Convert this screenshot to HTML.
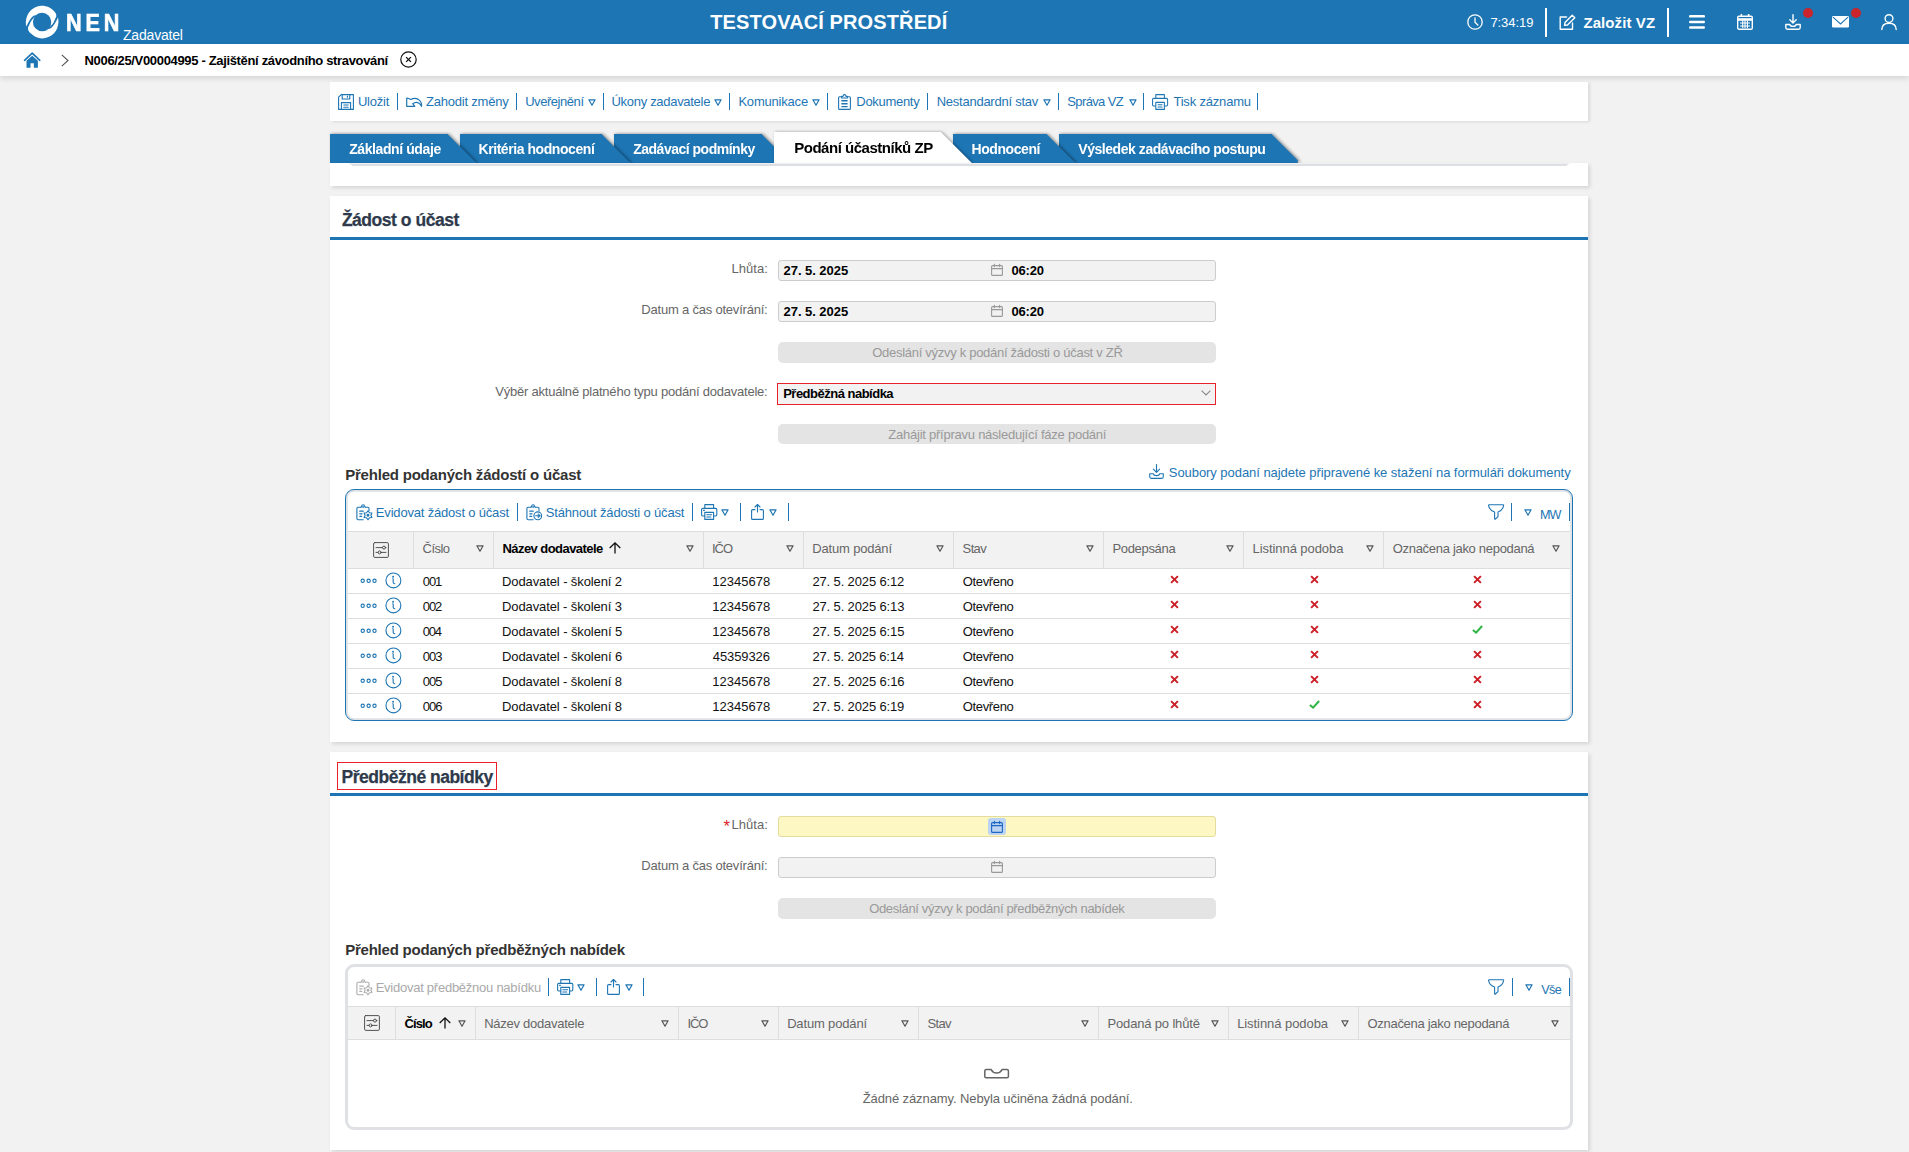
<!DOCTYPE html>
<html lang="cs">
<head>
<meta charset="utf-8">
<title>NEN - Zadavatel</title>
<style>
*{box-sizing:border-box;margin:0;padding:0}
html,body{width:1909px;height:1152px;overflow:hidden}
body{background:#f2f2f2;font-family:"Liberation Sans",sans-serif;font-size:13px;color:#000;position:relative}
.abs{position:absolute}
span.f{display:inline-block;white-space:nowrap}
svg{display:block;overflow:visible}
/* header */
#hdr{position:absolute;left:0;top:0;width:1909px;height:44px;background:#1d75b4;color:#fff}
#hdr .nen{position:absolute;left:66px;top:8.8px;font-weight:bold;font-size:24px;line-height:28px;transform:scaleX(.9);transform-origin:0 0;-webkit-text-stroke:0.7px #fff}
#hdr .zad{position:absolute;left:123px;top:27px;font-size:14px;line-height:16px}
#hdr .env{position:absolute;left:710px;top:10px;font-weight:bold;font-size:20px;line-height:24px}
#hdr .time{position:absolute;left:1491px;top:14.8px;font-size:13px;line-height:16px}
#hdr .newvz{position:absolute;left:1583.5px;top:13.8px;font-size:15px;font-weight:bold;line-height:18px}
#hdr .vsep{position:absolute;top:8px;width:2px;height:29px;background:#fff}
.dot{position:absolute;width:10px;height:10px;border-radius:50%;background:#c9252b}
/* breadcrumb */
#bc{position:absolute;left:0;top:44px;width:1909px;height:32px;background:#fff;box-shadow:0 2px 6px rgba(0,0,0,.14)}
#bc .t{position:absolute;left:85px;top:8.9px;font-weight:bold;font-size:13px;line-height:16px;color:#000}
/* panels */
.panel{position:absolute;left:330px;width:1258px;background:#fff;box-shadow:2px 2px 4px rgba(0,0,0,.12)}
.blue{color:#1d75b4}
/* toolbar */
#tb{top:82px;height:39px;box-shadow:2px 1px 3px rgba(0,0,0,.1)}
#tb .it{position:absolute;top:11px;height:17px;line-height:17px;color:#1d75b4;font-size:13px;white-space:nowrap}
#tb .sp{position:absolute;top:11px;width:1.3px;height:17px;background:#1d75b4}
.tri{position:absolute}
/* tabs */
.tab{position:absolute;top:134px;height:29px;background:#1d75b4;color:#fff;font-weight:bold;font-size:14px;line-height:31px;padding-left:19px;filter:drop-shadow(2px 0 1.5px rgba(0,0,0,.3)) drop-shadow(0 -1px 1px rgba(0,0,0,.12))}
.tab:after{content:"";position:absolute;right:-28.5px;top:0;width:29px;height:29px;background:inherit;clip-path:polygon(0 0,0 100%,100% 100%)}
.tab.act{top:132px;height:31px;background:#fff;color:#000;font-size:15px;line-height:31px;padding-left:20px;filter:drop-shadow(2px 0 1.5px rgba(0,0,0,.2)) drop-shadow(0 -1px 1px rgba(0,0,0,.1))}
.tab.act:after{width:31px;height:31px;right:-30.5px}
.tab.last:after{clip-path:polygon(0 0,0 100%,26.3px 100%,26.3px 26.3px)}

/* content */
.t{white-space:nowrap}
.title{font-weight:bold;color:#2e3a4b;-webkit-text-stroke:0.25px #2e3a4b}
.bline{background:#1d75b4}
.lbl{color:#666}
.val{font-weight:bold;color:#000}
.inp{background:#f2f2f2;border:1px solid #ccc;border-radius:3px}
.inp.sel{border-color:#e8212b;border-radius:0}
.inp.yel{background:#fdf7c3;border-color:#e3dc9c}
.hl{background:#bcd3f2;border-radius:3px}
.btn{background:#e4e4e4;border-radius:5px}
.btnt{color:#999}
.h2{font-weight:bold;color:#333}
.lnk{color:#1d75b4}
.lnk.dis{color:#a9a9a9}
.tbox{border:3px solid #dfe1e5;border-radius:9px}
.tbox.act{border:1.2px solid #1d75b4;box-shadow:inset 0 0 0 1.8px #dfe1e5}
.thead{background:#f2f2f2;border-top:1px solid #ddd;border-bottom:1px solid #ddd}
.vline{background:#ddd}
.hline{background:#ddd}
.th{color:#666}
.th.b{color:#000;font-weight:bold}
.td{color:#111}
.redbox{border:1px solid #e8212b}
.req{color:#dc2026}
.empty{color:#666}
</style>
</head>
<body>
<div id="hdr">
  <svg class="abs" style="left:26px;top:6px" width="32" height="32" viewBox="0 0 32 32" fill="#fff"><path d="M0.19 20.50C0.14 19.67 -0.28 17.27 -0.13 15.50C0.02 13.73 0.37 11.67 1.10 9.90C1.83 8.13 2.78 6.37 4.25 4.90C5.72 3.43 7.92 1.96 9.90 1.10C11.88 0.24 14.02 -0.28 16.10 -0.28C18.18 -0.28 20.57 0.35 22.40 1.10C24.23 1.85 25.85 3.15 27.10 4.25C28.35 5.35 29.37 6.66 29.90 7.70C30.43 8.74 30.23 10.03 30.30 10.50C30.12 10.88 29.70 11.76 29.25 12.75C28.80 13.74 28.29 15.31 27.60 16.45C26.91 17.59 25.87 18.71 25.10 19.60C24.33 20.49 23.35 21.43 23.00 21.80A9.14 9.14 0 0 0 9.7 9.45C9.40 9.47 8.62 9.21 7.90 9.60C7.18 9.99 6.23 10.82 5.40 11.80C4.57 12.78 3.62 14.32 2.90 15.50C2.18 16.68 1.55 18.07 1.10 18.90C0.65 19.73 0.34 20.23 0.19 20.50Z"/><path d="M0.19 20.50C0.14 19.67 -0.28 17.27 -0.13 15.50C0.02 13.73 0.37 11.67 1.10 9.90C1.83 8.13 2.78 6.37 4.25 4.90C5.72 3.43 7.92 1.96 9.90 1.10C11.88 0.24 14.02 -0.28 16.10 -0.28C18.18 -0.28 20.57 0.35 22.40 1.10C24.23 1.85 25.85 3.15 27.10 4.25C28.35 5.35 29.37 6.66 29.90 7.70C30.43 8.74 30.23 10.03 30.30 10.50C30.12 10.88 29.70 11.76 29.25 12.75C28.80 13.74 28.29 15.31 27.60 16.45C26.91 17.59 25.87 18.71 25.10 19.60C24.33 20.49 23.35 21.43 23.00 21.80A9.14 9.14 0 0 0 9.7 9.45C9.40 9.47 8.62 9.21 7.90 9.60C7.18 9.99 6.23 10.82 5.40 11.80C4.57 12.78 3.62 14.32 2.90 15.50C2.18 16.68 1.55 18.07 1.10 18.90C0.65 19.73 0.34 20.23 0.19 20.50Z" transform="rotate(180 16.15 16.05)"/><circle cx="16.1" cy="16" r="9.14" fill="#1d75b4"/></svg>
  <div class="nen"><span class="f" style="letter-spacing:4.308px;position:relative;left:0.12px">NEN</span></div>
  <div class="zad"><span class="f" style="letter-spacing:-0.184px;position:relative;left:-0.04px">Zadavatel</span></div>
  <div class="env"><span class="f" style="letter-spacing:0.115px;position:relative;left:0.29px">TESTOVACÍ PROSTŘEDÍ</span></div>
  <svg class="abs" style="left:1467px;top:14px" width="16" height="16" viewBox="0 0 16 16" fill="none" stroke="#fff" stroke-width="1.3"><circle cx="8" cy="8" r="7.2"/><path d="M8 3.8V8.3L10.8 11" stroke-linecap="round"/></svg>
  <div class="time"><span class="f" style="letter-spacing:-0.047px;position:relative;left:-0.63px">7:34:19</span></div>
  <div class="vsep" style="left:1545px"></div>
  <svg class="abs" style="left:1559px;top:14px" width="17" height="16" viewBox="0 0 17 16" fill="none" stroke="#fff" stroke-width="1.4" stroke-linejoin="round" stroke-linecap="round"><path d="M7.5 3H1.2V15.2H13.5V9"/><path d="M13.2 1.2L15.8 3.8L8.5 11L5.6 11.4L6 8.5Z"/></svg>
  <div class="newvz"><span class="f" style="letter-spacing:0.093px;position:relative;left:-0.12px">Založit VZ</span></div>
  <div class="vsep" style="left:1667px"></div>
  <svg class="abs" style="left:1689px;top:14px" width="16" height="16" viewBox="0 0 16 16" fill="#fff"><rect x="0" y="1" width="16" height="2.6" rx="1.2"/><rect x="0" y="6.7" width="16" height="2.6" rx="1.2"/><rect x="0" y="12.2" width="16" height="2.6" rx="1.2"/></svg>
  <svg class="abs" style="left:1737px;top:14px" width="16" height="16" viewBox="0 0 16 16" fill="none" stroke="#fff" stroke-width="1.4"><rect x="0.7" y="2.2" width="14.6" height="13" rx="1.2"/><path d="M0.7 5.5H15.3" stroke-width="2.6"/><path d="M4.4 0V3M11.6 0V3" stroke-width="1.6"/><path d="M3 9H13M3 12H13M5.7 6.5V14M8 6.5V14M10.4 6.5V14" stroke-width="1.1"/></svg>
  <svg class="abs" style="left:1785px;top:14px" width="16" height="16" viewBox="0 0 16 16" fill="none" stroke="#fff" stroke-width="1.4" stroke-linecap="round" stroke-linejoin="round"><path d="M8 0.7V8.5M4.8 5.8L8 9L11.2 5.8"/><path d="M0.8 10.5V13.6Q0.8 15.2 2.4 15.2H13.6Q15.2 15.2 15.2 13.6V10.5H11.2Q10.8 12.4 8 12.4Q5.2 12.4 4.8 10.5Z"/></svg>
  <div class="dot" style="left:1803px;top:8px"></div>
  <svg class="abs" style="left:1832px;top:16px" width="17" height="12" viewBox="0 0 17 12"><rect x="0" y="0" width="17" height="11.6" rx="1.4" fill="#fff"/><path d="M1 1.2L8.5 8L16 1.2" fill="none" stroke="#1d75b4" stroke-width="1.1"/></svg>
  <div class="dot" style="left:1851px;top:8px"></div>
  <svg class="abs" style="left:1881px;top:14px" width="16" height="16" viewBox="0 0 16 16" fill="none" stroke="#fff" stroke-width="1.4" stroke-linecap="round"><circle cx="8" cy="4.6" r="3.9"/><path d="M0.8 15.6C0.8 11.3 3.8 9.2 8 9.2C12.2 9.2 15.2 11.3 15.2 15.6"/></svg>
</div>
<div id="bc">
  <svg class="abs" style="left:23.8px;top:7.6px" width="16.4" height="16.4" viewBox="0 0 17 17"><path d="M8.5 1.2L0.8 8.2" fill="none"/><path d="M0.6 8.6L8.5 1.2L16.4 8.6" fill="none" stroke="#1d75b4" stroke-width="1.7" stroke-linecap="round" stroke-linejoin="round"/><path d="M2.6 9.2L8.5 3.8L14.4 9.2V16.3H10.2V11.6H6.8V16.3H2.6Z" fill="#1d75b4"/></svg>
  <svg class="abs" style="left:61px;top:10px" width="8" height="13" viewBox="0 0 8 13"><path d="M0.8 0.8L7 6.5L0.8 12.2" fill="none" stroke="#555" stroke-width="1.1"/></svg>
  <div class="t"><span class="f" style="letter-spacing:-0.336px;position:relative;left:-0.46px">N006/25/V00004995 - Zajištění závodního stravování</span></div>
  <svg class="abs" style="left:400.4px;top:6.7px" width="17" height="17" viewBox="0 0 17 17" fill="none" stroke="#111" stroke-width="1.2"><circle cx="8.5" cy="8.5" r="7.7"/><path d="M6.1 6.1L10.9 10.9M10.9 6.1L6.1 10.9" stroke-width="1.3"/></svg>
</div>
<div class="panel" id="tb">
<svg class="abs" style="left:8px;top:12px" width="16" height="16" viewBox="0 0 16 16" fill="none" stroke="#1d75b4" stroke-width="1.1" stroke-linejoin="round"><path d="M3.2 0.6H15.4V15.4H0.6V3.2Z"/><path d="M4.2 0.6V5H11.8V0.6M9.4 1.8V3.8"/><path d="M3.4 15.4V8.6H12.6V15.4M5.4 11H10.6M5.4 13.2H10.6"/></svg>
<div class="it" style="left:28.2px"><span class="f" style="letter-spacing:-0.23px;position:relative;left:-0.28px">Uložit</span></div>
<div class="sp" style="left:67px"></div>
<svg class="abs" style="left:75.7px;top:15.4px" width="17" height="11" viewBox="0 0 17 11" fill="none" stroke="#1d75b4" stroke-width="1.2" stroke-linejoin="round" stroke-linecap="round"><path d="M0.7 1.2V9.3H8.8L6.7 6.7Q10.2 4.2 13 6.2Q14.8 7.5 15.5 9.4Q16.2 5.4 12.6 2.6Q8.8 0 4.9 2.5L1.2 1Z"/></svg>
<div class="it" style="left:95.6px"><span class="f" style="letter-spacing:-0.222px;position:relative;left:0.5px">Zahodit změny</span></div>
<div class="sp" style="left:186px"></div>
<div class="it" style="left:195.3px"><span class="f" style="letter-spacing:-0.45px;position:relative;left:-0.13px">Uveřejnění</span></div>
<svg class="tri" style="left:258.20000000000005px;top:16.5px" width="8" height="7" viewBox="0 0 8 7"><path d="M0.9 0.8H7.1L4 6.2Z" fill="none" stroke="#1d75b4" stroke-width="1.2" stroke-linejoin="round"/></svg>
<div class="sp" style="left:273px"></div>
<div class="it" style="left:281.7px"><span class="f" style="letter-spacing:-0.298px;position:relative;left:-0.19px">Úkony zadavatele</span></div>
<svg class="tri" style="left:384.20000000000005px;top:16.5px" width="8" height="7" viewBox="0 0 8 7"><path d="M0.9 0.8H7.1L4 6.2Z" fill="none" stroke="#1d75b4" stroke-width="1.2" stroke-linejoin="round"/></svg>
<div class="sp" style="left:399px"></div>
<div class="it" style="left:408.8px"><span class="f" style="letter-spacing:-0.198px;position:relative;left:-0.42px">Komunikace</span></div>
<svg class="tri" style="left:482px;top:16.5px" width="8" height="7" viewBox="0 0 8 7"><path d="M0.9 0.8H7.1L4 6.2Z" fill="none" stroke="#1d75b4" stroke-width="1.2" stroke-linejoin="round"/></svg>
<div class="sp" style="left:497px"></div>
<svg class="abs" style="left:508.1px;top:11.9px" width="13" height="16" viewBox="0 0 13 16" fill="none" stroke="#1d75b4" stroke-width="1.1" stroke-linejoin="round"><path d="M3.6 2.8H1.6Q0.6 2.8 0.6 3.8V14.4Q0.6 15.4 1.6 15.4H11.4Q12.4 15.4 12.4 14.4V3.8Q12.4 2.8 11.4 2.8H9.4"/><path d="M3.6 4V2.4H5Q5.2 0.6 6.5 0.6Q7.8 0.6 8 2.4H9.4V4Z"/><path d="M3.4 6.8H9.6M3.4 9.7H9.6M3.4 12.6H9.6" stroke-width="1.4"/></svg>
<div class="it" style="left:526.5px"><span class="f" style="letter-spacing:-0.305px;position:relative;left:-0.16px">Dokumenty</span></div>
<div class="sp" style="left:597px"></div>
<div class="it" style="left:606.9px"><span class="f" style="letter-spacing:-0.238px;position:relative;left:-0.28px">Nestandardní stav</span></div>
<svg class="tri" style="left:713.2px;top:16.5px" width="8" height="7" viewBox="0 0 8 7"><path d="M0.9 0.8H7.1L4 6.2Z" fill="none" stroke="#1d75b4" stroke-width="1.2" stroke-linejoin="round"/></svg>
<div class="sp" style="left:728px"></div>
<div class="it" style="left:737.4px"><span class="f" style="letter-spacing:-0.639px;position:relative;left:-0.09px">Správa VZ</span></div>
<svg class="tri" style="left:798.5999999999999px;top:16.5px" width="8" height="7" viewBox="0 0 8 7"><path d="M0.9 0.8H7.1L4 6.2Z" fill="none" stroke="#1d75b4" stroke-width="1.2" stroke-linejoin="round"/></svg>
<div class="sp" style="left:813px"></div>
<svg class="abs" style="left:821.8px;top:12px" width="16.2" height="16" viewBox="0 0 17 16" preserveAspectRatio="none" fill="none" stroke="#1d75b4" stroke-width="1.1" stroke-linejoin="round"><path d="M4 4.4V0.6H13V4.4"/><path d="M4 12H1.8Q0.6 12 0.6 10.8V5.6Q0.6 4.4 1.8 4.4H15.2Q16.4 4.4 16.4 5.6V10.8Q16.4 12 15.2 12H13"/><path d="M4 8.4H13V15.4H4Z"/><path d="M6 10.8H11M6 13H11"/></svg>
<div class="it" style="left:842.6px"><span class="f" style="letter-spacing:-0.185px;position:relative;left:0.8px">Tisk záznamu</span></div>
<div class="sp" style="left:927px"></div>
</div>
<div class="panel" style="top:163px;height:23px;z-index:8"></div>
<div class="tab" style="left:330px;width:118px;z-index:6"><span class="f" style="letter-spacing:-0.405px;position:relative;left:0.2px">Základní údaje</span></div>
<div class="tab" style="left:460px;width:142px;z-index:5"><span class="f" style="letter-spacing:-0.435px;position:relative;left:-0.51px">Kritéria hodnocení</span></div>
<div class="tab" style="left:614.4px;width:147.6px;z-index:4"><span class="f" style="letter-spacing:-0.493px;position:relative;left:-0.22px">Zadávací podmínky</span></div>
<div class="tab act" style="left:774px;width:167.3px;z-index:7"><span class="f" style="letter-spacing:-0.475px;position:relative;left:0.22px">Podání účastníků ZP</span></div>
<div class="tab" style="left:953px;width:94px;z-index:3"><span class="f" style="letter-spacing:-0.42px;position:relative;left:-0.51px">Hodnocení</span></div>
<div class="tab last" style="left:1059px;width:213px;z-index:2"><span class="f" style="letter-spacing:-0.444px;position:relative;left:0.25px">Výsledek zadávacího postupu</span></div>
<div class="abs" style="left:348px;top:163px;width:1222px;height:3px;background:linear-gradient(#f0eeee 0,#f0eeee 45%,#dcdfe3 45%);z-index:9;clip-path:polygon(0 0,100% 0,calc(100% - 4px) 100%,5px 100%)"></div>
<div class="panel" style="top:196px;height:546px">
<div class="abs t title" style="left:11.3px;top:12.4px;font-size:17.5px;line-height:24px"><span class="f" style="letter-spacing:-0.472px;position:relative;left:0.6px">Žádost o účast</span></div>
<div class="abs bline" style="left:0px;top:41px;width:1258px;height:3px"></div>
<div class="abs t lbl" style="right:820.9px;top:64.8px;font-size:13px;line-height:16px"><span class="f" style="letter-spacing:0.04px;position:relative;left:0.83px">Lhůta:</span></div>
<div class="abs t lbl" style="right:820.9px;top:105.8px;font-size:13px;line-height:16px"><span class="f" style="letter-spacing:-0.209px;position:relative;left:0.42px">Datum a čas otevírání:</span></div>
<div class="abs t lbl" style="right:820.9px;top:187.7px;font-size:13px;line-height:16px"><span class="f" style="letter-spacing:-0.22px;position:relative;left:0.42px">Výběr aktuálně platného typu podání dodavatele:</span></div>
<div class="abs inp" style="left:448px;top:64.3px;width:438px;height:20.5px"></div>
<div class="abs t val" style="left:453.2px;top:67.0px;font-size:13px;line-height:16px"><span class="f" style="letter-spacing:-0.048px;position:relative;left:0.39px">27. 5. 2025</span></div>
<svg class="abs" style="left:661.2px;top:68.3px" width="12" height="12" viewBox="0 0 12 12" fill="none" stroke="#999" stroke-width="1.1" stroke-linejoin="round" stroke-linecap="round"><rect x="0.6" y="1.6" width="10.8" height="9.8" rx="1"/><path d="M0.6 4.6H11.4M3.4 0.3V2.6M8.6 0.3V2.6"/></svg>
<div class="abs t val" style="left:681px;top:67.0px;font-size:13px;line-height:16px"><span class="f" style="letter-spacing:-0.2px;position:relative;left:0.52px">06:20</span></div>
<div class="abs inp" style="left:448px;top:105.3px;width:438px;height:20.5px"></div>
<div class="abs t val" style="left:453.2px;top:108.0px;font-size:13px;line-height:16px"><span class="f" style="letter-spacing:-0.048px;position:relative;left:0.39px">27. 5. 2025</span></div>
<svg class="abs" style="left:661.2px;top:109.3px" width="12" height="12" viewBox="0 0 12 12" fill="none" stroke="#999" stroke-width="1.1" stroke-linejoin="round" stroke-linecap="round"><rect x="0.6" y="1.6" width="10.8" height="9.8" rx="1"/><path d="M0.6 4.6H11.4M3.4 0.3V2.6M8.6 0.3V2.6"/></svg>
<div class="abs t val" style="left:681px;top:108.0px;font-size:13px;line-height:16px"><span class="f" style="letter-spacing:-0.2px;position:relative;left:0.52px">06:20</span></div>
<div class="abs btn" style="left:448px;top:146px;width:438px;height:20.5px"></div>
<div class="abs t btnt" style="left:541.9px;top:149.2px;font-size:13px;line-height:16px"><span class="f" style="letter-spacing:-0.29px;position:relative;left:0.4px">Odeslání výzvy k podání žádosti o účast v ZŘ</span></div>
<div class="abs inp sel" style="left:447.2px;top:187.2px;width:438.8px;height:21.6px"></div>
<div class="abs t val" style="left:453.2px;top:189.8px;font-size:13px;line-height:16px"><span class="f" style="letter-spacing:-0.503px;position:relative;left:-0.03px">Předběžná nabídka</span></div>
<svg class="abs" style="left:870.6px;top:194.3px" width="10" height="6" viewBox="0 0 10 6" ><path d="M0.6 0.6L5 5L9.4 0.6" fill="none" stroke="#888" stroke-width="1.1"/></svg>
<div class="abs btn" style="left:448px;top:228px;width:438px;height:20px"></div>
<div class="abs t btnt" style="left:557.8px;top:231.0px;font-size:13px;line-height:16px"><span class="f" style="letter-spacing:-0.245px;position:relative;left:0.57px">Zahájit přípravu následující fáze podání</span></div>
<div class="abs t h2" style="left:15.2px;top:268.8px;font-size:15px;line-height:20px"><span class="f" style="letter-spacing:-0.206px;position:relative;left:-0.06px">Přehled podaných žádostí o účast</span></div>
<svg class="abs" style="left:818.8px;top:268.3px" width="15" height="15" viewBox="0 0 15 15" fill="none" stroke="#1d75b4" stroke-width="1.1" stroke-linejoin="round" stroke-linecap="round"><path d="M7.5 0.6V8M4.4 5.2L7.5 8.3L10.6 5.2"/><path d="M0.7 9.8V12.8Q0.7 14.4 2.3 14.4H12.7Q14.3 14.4 14.3 12.8V9.8H10.6Q10.2 11.6 7.5 11.6Q4.8 11.6 4.4 9.8Z"/></svg>
<div class="abs t lnk" style="left:838.8px;top:269.1px;font-size:13px;line-height:16px"><span class="f" style="letter-spacing:-0.053px;position:relative;left:-0.04px">Soubory podaní najdete připravené ke stažení na formuláři dokumenty</span></div>
<div class="abs tbox act" style="left:15px;top:293px;width:1228px;height:232px"></div>
<svg class="abs" style="left:25.6px;top:307.6px" width="17" height="17" viewBox="0 0 17 17" fill="none" stroke="#1d75b4" stroke-width="1.1" stroke-linejoin="round" stroke-linecap="round"><path d="M4.8 3.2H2.1Q0.9 3.2 0.9 4.4V14.5Q0.9 15.7 2.1 15.7H7.2"/><path d="M9.4 3.2H11.8Q13 3.2 13 4.4V6.4"/><path d="M4.8 3.2Q5.6 3.1 5.6 2.2Q5.8 0.8 7.1 0.8Q8.4 0.8 8.6 2.2Q8.6 3.1 9.4 3.2"/><circle cx="7.1" cy="2.9" r="0.35" fill="#1d75b4"/><path d="M3.8 7.2H7.2M3.8 9.8H6M3.9 12.4H5.6" stroke-width="1.3"/><path d="M12 6.8L13.45 8.79L15.9 9.05L14.9 11.3L15.9 13.55L13.45 13.81L12 15.8L10.55 13.81L8.1 13.55L9.1 11.3L8.1 9.05L10.55 8.79Z" fill="#fff"/><circle cx="12" cy="11.3" r="0.9" fill="#1d75b4"/></svg>
<div class="abs t lnk" style="left:46.1px;top:308.9px;font-size:13px;line-height:16px"><span class="f" style="letter-spacing:-0.186px;position:relative;left:-0.26px">Evidovat žádost o účast</span></div>
<div class="abs" style="left:187px;top:307.2px;width:1.3px;height:17.6px;background:#1d75b4"></div>
<svg class="abs" style="left:195.6px;top:307.6px" width="17" height="17" viewBox="0 0 17 17" fill="none" stroke="#1d75b4" stroke-width="1.1" stroke-linejoin="round" stroke-linecap="round"><path d="M4.8 3.2H2.1Q0.9 3.2 0.9 4.4V14.5Q0.9 15.7 2.1 15.7H7.2"/><path d="M9.4 3.2H11.8Q13 3.2 13 4.4V6.4"/><path d="M4.8 3.2Q5.6 3.1 5.6 2.2Q5.8 0.8 7.1 0.8Q8.4 0.8 8.6 2.2Q8.6 3.1 9.4 3.2"/><circle cx="7.1" cy="2.9" r="0.35" fill="#1d75b4"/><path d="M3.8 7.2H7.2M3.8 9.8H6M3.9 12.4H5.6" stroke-width="1.3"/><circle cx="11.8" cy="11.8" r="3.9" fill="#fff"/><path d="M9.6 11.8H13"/><path d="M12.4 9.9L14.5 11.8L12.4 13.7Z" fill="#1d75b4" stroke-width="0.6"/></svg>
<div class="abs t lnk" style="left:215.8px;top:308.9px;font-size:13px;line-height:16px"><span class="f" style="letter-spacing:-0.161px;position:relative;left:-0.04px">Stáhnout žádosti o účast</span></div>
<div class="abs" style="left:362px;top:307.2px;width:1.3px;height:17.6px;background:#1d75b4"></div>
<svg class="abs" style="left:371.3px;top:308px" width="17" height="16" viewBox="0 0 17 16" fill="none" stroke="#1d75b4" stroke-width="1.1" stroke-linejoin="round" stroke-linecap="round"><path d="M3.8 4.4V0.6H12.6V4.4"/><path d="M3.8 12H1.8Q0.6 12 0.6 10.8V5.6Q0.6 4.4 1.8 4.4H14.6Q15.8 4.4 15.8 5.6V10.8Q15.8 12 14.6 12H12.6"/><path d="M3.8 8.4H12.6V15.4H3.8Z"/><path d="M5.8 10.8H10.6M5.8 13H9.8M2.6 6.4H3.4"/></svg>
<svg class="abs" style="left:391.1px;top:312.6px" width="8" height="7" viewBox="0 0 8 7"><path d="M0.9 0.8H7.1L4 6.2Z" fill="none" stroke="#1d75b4" stroke-width="1.2" stroke-linejoin="round"/></svg>
<div class="abs" style="left:410px;top:307.2px;width:1.3px;height:17.6px;background:#1d75b4"></div>
<svg class="abs" style="left:421px;top:308px" width="13" height="16" viewBox="0 0 13 16" fill="none" stroke="#1d75b4" stroke-width="1.1" stroke-linejoin="round" stroke-linecap="round"><path d="M4 5.6H1.6Q0.6 5.6 0.6 6.6V14.4Q0.6 15.4 1.6 15.4H11.4Q12.4 15.4 12.4 14.4V6.6Q12.4 5.6 11.4 5.6H9"/><path d="M6.5 8V0.7M4 3L6.5 0.5L9 3"/></svg>
<svg class="abs" style="left:439.2px;top:312.6px" width="8" height="7" viewBox="0 0 8 7"><path d="M0.9 0.8H7.1L4 6.2Z" fill="none" stroke="#1d75b4" stroke-width="1.2" stroke-linejoin="round"/></svg>
<div class="abs" style="left:458px;top:307.2px;width:1.3px;height:17.6px;background:#1d75b4"></div>
<svg class="abs" style="left:1157.6px;top:308px" width="17" height="16" viewBox="0 0 17 16" fill="none" stroke="#1d75b4" stroke-width="1.1" stroke-linejoin="round" stroke-linecap="round"><path d="M1 0.8H15.2Q15.8 0.8 15.6 1.6Q14.6 6.6 10 8V12.6L7.4 15Q6.6 15.6 6.6 14.6V8Q1.6 6.6 0.6 1.6Q0.4 0.8 1 0.8Z"/></svg>
<div class="abs" style="left:1181px;top:307.2px;width:1.3px;height:17.6px;background:#1d75b4"></div>
<svg class="abs" style="left:1193.6px;top:312.6px" width="8" height="7" viewBox="0 0 8 7"><path d="M0.9 0.8H7.1L4 6.2Z" fill="none" stroke="#1d75b4" stroke-width="1.2" stroke-linejoin="round"/></svg>
<div class="abs t lnk" style="left:1210px;top:310.6px;font-size:12.6px;line-height:16px"><span class="f" style="letter-spacing:-0.936px;position:relative;left:-0.11px">MW</span></div>
<div class="abs" style="left:1239px;top:307.2px;width:1.3px;height:17.6px;background:#1d75b4"></div>
<div class="abs thead" style="left:18px;top:335px;width:1222px;height:37.5px"></div>
<div class="abs vline" style="left:82.7px;top:335px;width:1px;height:37.5px"></div>
<div class="abs vline" style="left:162.8px;top:335px;width:1px;height:37.5px"></div>
<div class="abs vline" style="left:372.7px;top:335px;width:1px;height:37.5px"></div>
<div class="abs vline" style="left:472.7px;top:335px;width:1px;height:37.5px"></div>
<div class="abs vline" style="left:622.8px;top:335px;width:1px;height:37.5px"></div>
<div class="abs vline" style="left:772.8px;top:335px;width:1px;height:37.5px"></div>
<div class="abs vline" style="left:912.8px;top:335px;width:1px;height:37.5px"></div>
<div class="abs vline" style="left:1052.7px;top:335px;width:1px;height:37.5px"></div>
<svg class="abs" style="left:43px;top:346.2px" width="16" height="16" viewBox="0 0 16 16" fill="none" stroke="#4a4a4a" stroke-width="0.95" stroke-linejoin="round" stroke-linecap="round"><rect x="0.6" y="0.6" width="14.8" height="14.8" rx="1.2"/><path d="M3 5.6H9.4M12.6 5.6H13M3 10.4H5M8.2 10.4H13"/><circle cx="11" cy="5.6" r="1.5"/><circle cx="6.6" cy="10.4" r="1.5"/></svg>
<div class="abs t th" style="left:92.4px;top:345.0px;font-size:13px;line-height:16px"><span class="f" style="letter-spacing:-0.542px;position:relative;left:0.21px">Číslo</span></div>
<svg class="abs" style="left:146.1px;top:349.3px" width="8" height="7" viewBox="0 0 8 7"><path d="M0.9 0.8H7.1L4 6.2Z" fill="none" stroke="#555" stroke-width="1.2" stroke-linejoin="round"/></svg>
<div class="abs t th b" style="left:172.5px;top:345.0px;font-size:13px;line-height:16px"><span class="f" style="letter-spacing:-0.558px">Název dodavatele</span></div>
<svg class="abs" style="left:279.4px;top:346.2px" width="12" height="12" viewBox="0 0 12 12" ><path d="M6 11.4V1M0.7 6L6 0.8L11.3 6" fill="none" stroke="#111" stroke-width="1.3"/></svg>
<svg class="abs" style="left:356.0px;top:349.3px" width="8" height="7" viewBox="0 0 8 7"><path d="M0.9 0.8H7.1L4 6.2Z" fill="none" stroke="#555" stroke-width="1.2" stroke-linejoin="round"/></svg>
<div class="abs t th" style="left:382.4px;top:345.0px;font-size:13px;line-height:16px"><span class="f" style="letter-spacing:-1.087px;position:relative;left:-0.31px">IČO</span></div>
<svg class="abs" style="left:456.0px;top:349.3px" width="8" height="7" viewBox="0 0 8 7"><path d="M0.9 0.8H7.1L4 6.2Z" fill="none" stroke="#555" stroke-width="1.2" stroke-linejoin="round"/></svg>
<div class="abs t th" style="left:482.4px;top:345.0px;font-size:13px;line-height:16px"><span class="f" style="letter-spacing:-0.185px;position:relative;left:-0.04px">Datum podání</span></div>
<svg class="abs" style="left:606.1px;top:349.3px" width="8" height="7" viewBox="0 0 8 7"><path d="M0.9 0.8H7.1L4 6.2Z" fill="none" stroke="#555" stroke-width="1.2" stroke-linejoin="round"/></svg>
<div class="abs t th" style="left:632.5px;top:345.0px;font-size:13px;line-height:16px"><span class="f" style="letter-spacing:-0.627px;position:relative;left:0.1px">Stav</span></div>
<svg class="abs" style="left:756.1px;top:349.3px" width="8" height="7" viewBox="0 0 8 7"><path d="M0.9 0.8H7.1L4 6.2Z" fill="none" stroke="#555" stroke-width="1.2" stroke-linejoin="round"/></svg>
<div class="abs t th" style="left:782.5px;top:345.0px;font-size:13px;line-height:16px"><span class="f" style="letter-spacing:-0.331px;position:relative;left:-0.02px">Podepsána</span></div>
<svg class="abs" style="left:896.1px;top:349.3px" width="8" height="7" viewBox="0 0 8 7"><path d="M0.9 0.8H7.1L4 6.2Z" fill="none" stroke="#555" stroke-width="1.2" stroke-linejoin="round"/></svg>
<div class="abs t th" style="left:922.5px;top:345.0px;font-size:13px;line-height:16px"><span class="f" style="letter-spacing:-0.06px;position:relative;left:-0.02px">Listinná podoba</span></div>
<svg class="abs" style="left:1036.0px;top:349.3px" width="8" height="7" viewBox="0 0 8 7"><path d="M0.9 0.8H7.1L4 6.2Z" fill="none" stroke="#555" stroke-width="1.2" stroke-linejoin="round"/></svg>
<div class="abs t th" style="left:1062.4px;top:345.0px;font-size:13px;line-height:16px"><span class="f" style="letter-spacing:-0.3px;position:relative;left:0.34px">Označena jako nepodaná</span></div>
<svg class="abs" style="left:1221.5px;top:349.3px" width="8" height="7" viewBox="0 0 8 7"><path d="M0.9 0.8H7.1L4 6.2Z" fill="none" stroke="#555" stroke-width="1.2" stroke-linejoin="round"/></svg>
<svg class="abs" style="left:30.6px;top:382.4px" width="17" height="6" viewBox="0 0 17 6" fill="none" stroke="#1d75b4" stroke-width="1.1" stroke-linejoin="round" stroke-linecap="round"><circle cx="1.7" cy="2.8" r="1.65"/><circle cx="7.65" cy="2.8" r="1.65"/><circle cx="13.5" cy="2.8" r="1.65"/></svg>
<svg class="abs" style="left:55.2px;top:376.2px" width="17" height="17" viewBox="0 0 17 17" fill="none" stroke="#1d75b4" stroke-width="1.1" stroke-linejoin="round" stroke-linecap="round"><circle cx="8.4" cy="8.4" r="7.45"/><path d="M7.7 6.8L8.2 7V10.6Q8.4 11.6 9.8 11.8" stroke-width="1.1"/><circle cx="8.1" cy="4.8" r="0.4" fill="#1d75b4"/></svg>
<div class="abs t td" style="left:92.4px;top:378.0px;font-size:13px;line-height:16px"><span class="f" style="letter-spacing:-1.062px;position:relative;left:0.36px">001</span></div>
<div class="abs t td" style="left:172.2px;top:378.0px;font-size:13px;line-height:16px"><span class="f" style="letter-spacing:-0.102px;position:relative;left:-0.2px">Dodavatel - školení 2</span></div>
<div class="abs t td" style="left:382.3px;top:378.0px;font-size:13px;line-height:16px"><span class="f" style="letter-spacing:0.014px;position:relative;left:0.06px">12345678</span></div>
<div class="abs t td" style="left:482.2px;top:378.0px;font-size:13px;line-height:16px"><span class="f" style="letter-spacing:-0.137px;position:relative;left:0.24px">27. 5. 2025 6:12</span></div>
<div class="abs t td" style="left:632.5px;top:378.0px;font-size:13px;line-height:16px"><span class="f" style="letter-spacing:-0.343px;position:relative;left:0.27px">Otevřeno</span></div>
<svg class="abs" style="left:839.5px;top:379.3px" width="9" height="9" viewBox="0 0 9 9" ><path d="M1.1 1.1L7.9 7.9M7.9 1.1L1.1 7.9" fill="none" stroke="#cc2128" stroke-width="2"/></svg>
<svg class="abs" style="left:979.9px;top:379.3px" width="9" height="9" viewBox="0 0 9 9" ><path d="M1.1 1.1L7.9 7.9M7.9 1.1L1.1 7.9" fill="none" stroke="#cc2128" stroke-width="2"/></svg>
<svg class="abs" style="left:1142.9px;top:379.3px" width="9" height="9" viewBox="0 0 9 9" ><path d="M1.1 1.1L7.9 7.9M7.9 1.1L1.1 7.9" fill="none" stroke="#cc2128" stroke-width="2"/></svg>
<div class="abs hline" style="left:18px;top:397.0px;width:1222px;height:1px"></div>
<svg class="abs" style="left:30.6px;top:407.4px" width="17" height="6" viewBox="0 0 17 6" fill="none" stroke="#1d75b4" stroke-width="1.1" stroke-linejoin="round" stroke-linecap="round"><circle cx="1.7" cy="2.8" r="1.65"/><circle cx="7.65" cy="2.8" r="1.65"/><circle cx="13.5" cy="2.8" r="1.65"/></svg>
<svg class="abs" style="left:55.2px;top:401.2px" width="17" height="17" viewBox="0 0 17 17" fill="none" stroke="#1d75b4" stroke-width="1.1" stroke-linejoin="round" stroke-linecap="round"><circle cx="8.4" cy="8.4" r="7.45"/><path d="M7.7 6.8L8.2 7V10.6Q8.4 11.6 9.8 11.8" stroke-width="1.1"/><circle cx="8.1" cy="4.8" r="0.4" fill="#1d75b4"/></svg>
<div class="abs t td" style="left:92.4px;top:403.0px;font-size:13px;line-height:16px"><span class="f" style="letter-spacing:-1.062px;position:relative;left:0.36px">002</span></div>
<div class="abs t td" style="left:172.2px;top:403.0px;font-size:13px;line-height:16px"><span class="f" style="letter-spacing:-0.111px;position:relative;left:-0.2px">Dodavatel - školení 3</span></div>
<div class="abs t td" style="left:382.3px;top:403.0px;font-size:13px;line-height:16px"><span class="f" style="letter-spacing:0.014px;position:relative;left:0.06px">12345678</span></div>
<div class="abs t td" style="left:482.2px;top:403.0px;font-size:13px;line-height:16px"><span class="f" style="letter-spacing:-0.135px;position:relative;left:0.24px">27. 5. 2025 6:13</span></div>
<div class="abs t td" style="left:632.5px;top:403.0px;font-size:13px;line-height:16px"><span class="f" style="letter-spacing:-0.343px;position:relative;left:0.27px">Otevřeno</span></div>
<svg class="abs" style="left:839.5px;top:404.3px" width="9" height="9" viewBox="0 0 9 9" ><path d="M1.1 1.1L7.9 7.9M7.9 1.1L1.1 7.9" fill="none" stroke="#cc2128" stroke-width="2"/></svg>
<svg class="abs" style="left:979.9px;top:404.3px" width="9" height="9" viewBox="0 0 9 9" ><path d="M1.1 1.1L7.9 7.9M7.9 1.1L1.1 7.9" fill="none" stroke="#cc2128" stroke-width="2"/></svg>
<svg class="abs" style="left:1142.9px;top:404.3px" width="9" height="9" viewBox="0 0 9 9" ><path d="M1.1 1.1L7.9 7.9M7.9 1.1L1.1 7.9" fill="none" stroke="#cc2128" stroke-width="2"/></svg>
<div class="abs hline" style="left:18px;top:422.0px;width:1222px;height:1px"></div>
<svg class="abs" style="left:30.6px;top:432.4px" width="17" height="6" viewBox="0 0 17 6" fill="none" stroke="#1d75b4" stroke-width="1.1" stroke-linejoin="round" stroke-linecap="round"><circle cx="1.7" cy="2.8" r="1.65"/><circle cx="7.65" cy="2.8" r="1.65"/><circle cx="13.5" cy="2.8" r="1.65"/></svg>
<svg class="abs" style="left:55.2px;top:426.2px" width="17" height="17" viewBox="0 0 17 17" fill="none" stroke="#1d75b4" stroke-width="1.1" stroke-linejoin="round" stroke-linecap="round"><circle cx="8.4" cy="8.4" r="7.45"/><path d="M7.7 6.8L8.2 7V10.6Q8.4 11.6 9.8 11.8" stroke-width="1.1"/><circle cx="8.1" cy="4.8" r="0.4" fill="#1d75b4"/></svg>
<div class="abs t td" style="left:92.4px;top:428.0px;font-size:13px;line-height:16px"><span class="f" style="letter-spacing:-1.175px;position:relative;left:0.36px">004</span></div>
<div class="abs t td" style="left:172.2px;top:428.0px;font-size:13px;line-height:16px"><span class="f" style="letter-spacing:-0.099px;position:relative;left:-0.2px">Dodavatel - školení 5</span></div>
<div class="abs t td" style="left:382.3px;top:428.0px;font-size:13px;line-height:16px"><span class="f" style="letter-spacing:0.014px;position:relative;left:0.06px">12345678</span></div>
<div class="abs t td" style="left:482.2px;top:428.0px;font-size:13px;line-height:16px"><span class="f" style="letter-spacing:-0.134px;position:relative;left:0.24px">27. 5. 2025 6:15</span></div>
<div class="abs t td" style="left:632.5px;top:428.0px;font-size:13px;line-height:16px"><span class="f" style="letter-spacing:-0.343px;position:relative;left:0.27px">Otevřeno</span></div>
<svg class="abs" style="left:839.5px;top:429.3px" width="9" height="9" viewBox="0 0 9 9" ><path d="M1.1 1.1L7.9 7.9M7.9 1.1L1.1 7.9" fill="none" stroke="#cc2128" stroke-width="2"/></svg>
<svg class="abs" style="left:979.9px;top:429.3px" width="9" height="9" viewBox="0 0 9 9" ><path d="M1.1 1.1L7.9 7.9M7.9 1.1L1.1 7.9" fill="none" stroke="#cc2128" stroke-width="2"/></svg>
<svg class="abs" style="left:1141.9px;top:429.3px" width="11" height="9" viewBox="0 0 11 9" ><path d="M0.9 4.9L4.1 7.7L10.1 1" fill="none" stroke="#2fb344" stroke-width="2"/></svg>
<div class="abs hline" style="left:18px;top:447.0px;width:1222px;height:1px"></div>
<svg class="abs" style="left:30.6px;top:457.4px" width="17" height="6" viewBox="0 0 17 6" fill="none" stroke="#1d75b4" stroke-width="1.1" stroke-linejoin="round" stroke-linecap="round"><circle cx="1.7" cy="2.8" r="1.65"/><circle cx="7.65" cy="2.8" r="1.65"/><circle cx="13.5" cy="2.8" r="1.65"/></svg>
<svg class="abs" style="left:55.2px;top:451.2px" width="17" height="17" viewBox="0 0 17 17" fill="none" stroke="#1d75b4" stroke-width="1.1" stroke-linejoin="round" stroke-linecap="round"><circle cx="8.4" cy="8.4" r="7.45"/><path d="M7.7 6.8L8.2 7V10.6Q8.4 11.6 9.8 11.8" stroke-width="1.1"/><circle cx="8.1" cy="4.8" r="0.4" fill="#1d75b4"/></svg>
<div class="abs t td" style="left:92.4px;top:453.0px;font-size:13px;line-height:16px"><span class="f" style="letter-spacing:-0.985px;position:relative;left:0.36px">003</span></div>
<div class="abs t td" style="left:172.2px;top:453.0px;font-size:13px;line-height:16px"><span class="f" style="letter-spacing:-0.098px;position:relative;left:-0.2px">Dodavatel - školení 6</span></div>
<div class="abs t td" style="left:382.3px;top:453.0px;font-size:13px;line-height:16px"><span class="f" style="letter-spacing:-0.112px;position:relative;left:0.56px">45359326</span></div>
<div class="abs t td" style="left:482.2px;top:453.0px;font-size:13px;line-height:16px"><span class="f" style="letter-spacing:-0.153px;position:relative;left:0.24px">27. 5. 2025 6:14</span></div>
<div class="abs t td" style="left:632.5px;top:453.0px;font-size:13px;line-height:16px"><span class="f" style="letter-spacing:-0.343px;position:relative;left:0.27px">Otevřeno</span></div>
<svg class="abs" style="left:839.5px;top:454.3px" width="9" height="9" viewBox="0 0 9 9" ><path d="M1.1 1.1L7.9 7.9M7.9 1.1L1.1 7.9" fill="none" stroke="#cc2128" stroke-width="2"/></svg>
<svg class="abs" style="left:979.9px;top:454.3px" width="9" height="9" viewBox="0 0 9 9" ><path d="M1.1 1.1L7.9 7.9M7.9 1.1L1.1 7.9" fill="none" stroke="#cc2128" stroke-width="2"/></svg>
<svg class="abs" style="left:1142.9px;top:454.3px" width="9" height="9" viewBox="0 0 9 9" ><path d="M1.1 1.1L7.9 7.9M7.9 1.1L1.1 7.9" fill="none" stroke="#cc2128" stroke-width="2"/></svg>
<div class="abs hline" style="left:18px;top:472.0px;width:1222px;height:1px"></div>
<svg class="abs" style="left:30.6px;top:482.4px" width="17" height="6" viewBox="0 0 17 6" fill="none" stroke="#1d75b4" stroke-width="1.1" stroke-linejoin="round" stroke-linecap="round"><circle cx="1.7" cy="2.8" r="1.65"/><circle cx="7.65" cy="2.8" r="1.65"/><circle cx="13.5" cy="2.8" r="1.65"/></svg>
<svg class="abs" style="left:55.2px;top:476.2px" width="17" height="17" viewBox="0 0 17 17" fill="none" stroke="#1d75b4" stroke-width="1.1" stroke-linejoin="round" stroke-linecap="round"><circle cx="8.4" cy="8.4" r="7.45"/><path d="M7.7 6.8L8.2 7V10.6Q8.4 11.6 9.8 11.8" stroke-width="1.1"/><circle cx="8.1" cy="4.8" r="0.4" fill="#1d75b4"/></svg>
<div class="abs t td" style="left:92.4px;top:478.0px;font-size:13px;line-height:16px"><span class="f" style="letter-spacing:-0.957px;position:relative;left:0.36px">005</span></div>
<div class="abs t td" style="left:172.2px;top:478.0px;font-size:13px;line-height:16px"><span class="f" style="letter-spacing:-0.112px;position:relative;left:-0.2px">Dodavatel - školení 8</span></div>
<div class="abs t td" style="left:382.3px;top:478.0px;font-size:13px;line-height:16px"><span class="f" style="letter-spacing:0.014px;position:relative;left:0.06px">12345678</span></div>
<div class="abs t td" style="left:482.2px;top:478.0px;font-size:13px;line-height:16px"><span class="f" style="letter-spacing:-0.128px;position:relative;left:0.24px">27. 5. 2025 6:16</span></div>
<div class="abs t td" style="left:632.5px;top:478.0px;font-size:13px;line-height:16px"><span class="f" style="letter-spacing:-0.343px;position:relative;left:0.27px">Otevřeno</span></div>
<svg class="abs" style="left:839.5px;top:479.3px" width="9" height="9" viewBox="0 0 9 9" ><path d="M1.1 1.1L7.9 7.9M7.9 1.1L1.1 7.9" fill="none" stroke="#cc2128" stroke-width="2"/></svg>
<svg class="abs" style="left:979.9px;top:479.3px" width="9" height="9" viewBox="0 0 9 9" ><path d="M1.1 1.1L7.9 7.9M7.9 1.1L1.1 7.9" fill="none" stroke="#cc2128" stroke-width="2"/></svg>
<svg class="abs" style="left:1142.9px;top:479.3px" width="9" height="9" viewBox="0 0 9 9" ><path d="M1.1 1.1L7.9 7.9M7.9 1.1L1.1 7.9" fill="none" stroke="#cc2128" stroke-width="2"/></svg>
<div class="abs hline" style="left:18px;top:497.0px;width:1222px;height:1px"></div>
<svg class="abs" style="left:30.6px;top:507.4px" width="17" height="6" viewBox="0 0 17 6" fill="none" stroke="#1d75b4" stroke-width="1.1" stroke-linejoin="round" stroke-linecap="round"><circle cx="1.7" cy="2.8" r="1.65"/><circle cx="7.65" cy="2.8" r="1.65"/><circle cx="13.5" cy="2.8" r="1.65"/></svg>
<svg class="abs" style="left:55.2px;top:501.2px" width="17" height="17" viewBox="0 0 17 17" fill="none" stroke="#1d75b4" stroke-width="1.1" stroke-linejoin="round" stroke-linecap="round"><circle cx="8.4" cy="8.4" r="7.45"/><path d="M7.7 6.8L8.2 7V10.6Q8.4 11.6 9.8 11.8" stroke-width="1.1"/><circle cx="8.1" cy="4.8" r="0.4" fill="#1d75b4"/></svg>
<div class="abs t td" style="left:92.4px;top:503.0px;font-size:13px;line-height:16px"><span class="f" style="letter-spacing:-0.967px;position:relative;left:0.4px">006</span></div>
<div class="abs t td" style="left:172.2px;top:503.0px;font-size:13px;line-height:16px"><span class="f" style="letter-spacing:-0.112px;position:relative;left:-0.2px">Dodavatel - školení 8</span></div>
<div class="abs t td" style="left:382.3px;top:503.0px;font-size:13px;line-height:16px"><span class="f" style="letter-spacing:0.014px;position:relative;left:0.06px">12345678</span></div>
<div class="abs t td" style="left:482.2px;top:503.0px;font-size:13px;line-height:16px"><span class="f" style="letter-spacing:-0.137px;position:relative;left:0.24px">27. 5. 2025 6:19</span></div>
<div class="abs t td" style="left:632.5px;top:503.0px;font-size:13px;line-height:16px"><span class="f" style="letter-spacing:-0.343px;position:relative;left:0.27px">Otevřeno</span></div>
<svg class="abs" style="left:839.5px;top:504.3px" width="9" height="9" viewBox="0 0 9 9" ><path d="M1.1 1.1L7.9 7.9M7.9 1.1L1.1 7.9" fill="none" stroke="#cc2128" stroke-width="2"/></svg>
<svg class="abs" style="left:978.9px;top:504.3px" width="11" height="9" viewBox="0 0 11 9" ><path d="M0.9 4.9L4.1 7.7L10.1 1" fill="none" stroke="#2fb344" stroke-width="2"/></svg>
<svg class="abs" style="left:1142.9px;top:504.3px" width="9" height="9" viewBox="0 0 9 9" ><path d="M1.1 1.1L7.9 7.9M7.9 1.1L1.1 7.9" fill="none" stroke="#cc2128" stroke-width="2"/></svg>
</div>
<div class="panel" style="top:752px;height:398px">
<div class="abs redbox" style="left:7px;top:10px;width:160px;height:28px"></div>
<div class="abs t title" style="left:11.6px;top:12.6px;font-size:17.5px;line-height:24px"><span class="f" style="letter-spacing:-0.492px;position:relative;left:-0.06px">Předběžné nabídky</span></div>
<div class="abs bline" style="left:0px;top:41px;width:1258px;height:3px"></div>
<div class="abs t lbl" style="right:820.9px;top:65.0px;font-size:13px;line-height:16px"><span class="f" style="letter-spacing:0.04px;position:relative;left:0.83px">Lhůta:</span></div>
<div class="abs t req" style="left:393.4px;top:65.6px;font-size:16.5px;line-height:16px"><span class="f">*</span></div>
<div class="abs t lbl" style="right:820.9px;top:105.9px;font-size:13px;line-height:16px"><span class="f" style="letter-spacing:-0.209px;position:relative;left:0.42px">Datum a čas otevírání:</span></div>
<div class="abs inp yel" style="left:448px;top:64.2px;width:438px;height:20.5px"></div>
<div class="abs hl" style="left:658px;top:66px;width:17.6px;height:17px"></div>
<svg class="abs" style="left:661px;top:68.6px" width="12" height="12" viewBox="0 0 12 12" fill="none" stroke="#1d66c2" stroke-width="1.1" stroke-linejoin="round" stroke-linecap="round"><rect x="0.6" y="1.6" width="10.8" height="9.8" rx="1"/><path d="M0.6 4.6H11.4M3.4 0.3V2.6M8.6 0.3V2.6"/></svg>
<div class="abs inp" style="left:448px;top:105.2px;width:438px;height:20.5px"></div>
<svg class="abs" style="left:661.2px;top:109.4px" width="12" height="12" viewBox="0 0 12 12" fill="none" stroke="#999" stroke-width="1.1" stroke-linejoin="round" stroke-linecap="round"><rect x="0.6" y="1.6" width="10.8" height="9.8" rx="1"/><path d="M0.6 4.6H11.4M3.4 0.3V2.6M8.6 0.3V2.6"/></svg>
<div class="abs btn" style="left:448px;top:146.2px;width:438px;height:20.5px"></div>
<div class="abs t btnt" style="left:539px;top:149.3px;font-size:13px;line-height:16px"><span class="f" style="letter-spacing:-0.332px;position:relative;left:0.19px">Odeslání výzvy k podání předběžných nabídek</span></div>
<div class="abs t h2" style="left:15.2px;top:188.0px;font-size:15px;line-height:20px"><span class="f" style="letter-spacing:-0.219px;position:relative;left:-0.06px">Přehled podaných předběžných nabídek</span></div>
<div class="abs tbox" style="left:15px;top:212.2px;width:1228px;height:165.8px"></div>
<svg class="abs" style="left:25.6px;top:226.6px" width="17" height="17" viewBox="0 0 17 17" fill="none" stroke="#adadad" stroke-width="1.1" stroke-linejoin="round" stroke-linecap="round"><path d="M4.8 3.2H2.1Q0.9 3.2 0.9 4.4V14.5Q0.9 15.7 2.1 15.7H7.2"/><path d="M9.4 3.2H11.8Q13 3.2 13 4.4V6.4"/><path d="M4.8 3.2Q5.6 3.1 5.6 2.2Q5.8 0.8 7.1 0.8Q8.4 0.8 8.6 2.2Q8.6 3.1 9.4 3.2"/><circle cx="7.1" cy="2.9" r="0.35" fill="#adadad"/><path d="M3.8 7.2H7.2M3.8 9.8H6M3.9 12.4H5.6" stroke-width="1.3"/><path d="M12 6.8L13.45 8.79L15.9 9.05L14.9 11.3L15.9 13.55L13.45 13.81L12 15.8L10.55 13.81L8.1 13.55L9.1 11.3L8.1 9.05L10.55 8.79Z" fill="#fff"/><circle cx="12" cy="11.3" r="0.9" fill="#adadad"/></svg>
<div class="abs t lnk dis" style="left:45.7px;top:227.9px;font-size:13px;line-height:16px"><span class="f" style="letter-spacing:-0.25px;position:relative;left:-0.05px">Evidovat předběžnou nabídku</span></div>
<div class="abs" style="left:218px;top:226.2px;width:1.3px;height:17.6px;background:#1d75b4"></div>
<svg class="abs" style="left:227px;top:227px" width="17" height="16" viewBox="0 0 17 16" fill="none" stroke="#1d75b4" stroke-width="1.1" stroke-linejoin="round" stroke-linecap="round"><path d="M3.8 4.4V0.6H12.6V4.4"/><path d="M3.8 12H1.8Q0.6 12 0.6 10.8V5.6Q0.6 4.4 1.8 4.4H14.6Q15.8 4.4 15.8 5.6V10.8Q15.8 12 14.6 12H12.6"/><path d="M3.8 8.4H12.6V15.4H3.8Z"/><path d="M5.8 10.8H10.6M5.8 13H9.8M2.6 6.4H3.4"/></svg>
<svg class="abs" style="left:247px;top:231.6px" width="8" height="7" viewBox="0 0 8 7"><path d="M0.9 0.8H7.1L4 6.2Z" fill="none" stroke="#1d75b4" stroke-width="1.2" stroke-linejoin="round"/></svg>
<div class="abs" style="left:266px;top:226.2px;width:1.3px;height:17.6px;background:#1d75b4"></div>
<svg class="abs" style="left:276.8px;top:227px" width="13" height="16" viewBox="0 0 13 16" fill="none" stroke="#1d75b4" stroke-width="1.1" stroke-linejoin="round" stroke-linecap="round"><path d="M4 5.6H1.6Q0.6 5.6 0.6 6.6V14.4Q0.6 15.4 1.6 15.4H11.4Q12.4 15.4 12.4 14.4V6.6Q12.4 5.6 11.4 5.6H9"/><path d="M6.5 8V0.7M4 3L6.5 0.5L9 3"/></svg>
<svg class="abs" style="left:295.4px;top:231.6px" width="8" height="7" viewBox="0 0 8 7"><path d="M0.9 0.8H7.1L4 6.2Z" fill="none" stroke="#1d75b4" stroke-width="1.2" stroke-linejoin="round"/></svg>
<div class="abs" style="left:313px;top:226.2px;width:1.3px;height:17.6px;background:#1d75b4"></div>
<svg class="abs" style="left:1158.4px;top:227px" width="17" height="16" viewBox="0 0 17 16" fill="none" stroke="#1d75b4" stroke-width="1.1" stroke-linejoin="round" stroke-linecap="round"><path d="M1 0.8H15.2Q15.8 0.8 15.6 1.6Q14.6 6.6 10 8V12.6L7.4 15Q6.6 15.6 6.6 14.6V8Q1.6 6.6 0.6 1.6Q0.4 0.8 1 0.8Z"/></svg>
<div class="abs" style="left:1182px;top:226.2px;width:1.3px;height:17.6px;background:#1d75b4"></div>
<svg class="abs" style="left:1194.6px;top:231.6px" width="8" height="7" viewBox="0 0 8 7"><path d="M0.9 0.8H7.1L4 6.2Z" fill="none" stroke="#1d75b4" stroke-width="1.2" stroke-linejoin="round"/></svg>
<div class="abs t lnk" style="left:1210.6px;top:229.6px;font-size:12.6px;line-height:16px"><span class="f" style="letter-spacing:-0.514px;position:relative;left:0.59px">Vše</span></div>
<div class="abs" style="left:1239px;top:226.2px;width:1.3px;height:17.6px;background:#1d75b4"></div>
<div class="abs thead" style="left:18px;top:254px;width:1222px;height:33.5px"></div>
<div class="abs vline" style="left:64.9px;top:254px;width:1px;height:33.5px"></div>
<div class="abs vline" style="left:144.7px;top:254px;width:1px;height:33.5px"></div>
<div class="abs vline" style="left:348.1px;top:254px;width:1px;height:33.5px"></div>
<div class="abs vline" style="left:447.7px;top:254px;width:1px;height:33.5px"></div>
<div class="abs vline" style="left:587.8px;top:254px;width:1px;height:33.5px"></div>
<div class="abs vline" style="left:768.0px;top:254px;width:1px;height:33.5px"></div>
<div class="abs vline" style="left:897.7px;top:254px;width:1px;height:33.5px"></div>
<div class="abs vline" style="left:1027.8px;top:254px;width:1px;height:33.5px"></div>
<svg class="abs" style="left:33.8px;top:263.2px" width="16" height="16" viewBox="0 0 16 16" fill="none" stroke="#4a4a4a" stroke-width="0.95" stroke-linejoin="round" stroke-linecap="round"><rect x="0.6" y="0.6" width="14.8" height="14.8" rx="1.2"/><path d="M3 5.6H9.4M12.6 5.6H13M3 10.4H5M8.2 10.4H13"/><circle cx="11" cy="5.6" r="1.5"/><circle cx="6.6" cy="10.4" r="1.5"/></svg>
<div class="abs t th b" style="left:74.0px;top:263.9px;font-size:13px;line-height:16px"><span class="f" style="letter-spacing:-0.913px;position:relative;left:0.53px">Číslo</span></div>
<svg class="abs" style="left:108.8px;top:265px" width="12" height="12" viewBox="0 0 12 12" ><path d="M6 11.4V1M0.7 6L6 0.8L11.3 6" fill="none" stroke="#111" stroke-width="1.3"/></svg>
<svg class="abs" style="left:127.8px;top:268.1px" width="8" height="7" viewBox="0 0 8 7"><path d="M0.9 0.8H7.1L4 6.2Z" fill="none" stroke="#555" stroke-width="1.2" stroke-linejoin="round"/></svg>
<div class="abs t th" style="left:154.2px;top:263.9px;font-size:13px;line-height:16px"><span class="f" style="letter-spacing:-0.254px;position:relative;left:-0.07px">Název dodavatele</span></div>
<svg class="abs" style="left:331.2px;top:268.1px" width="8" height="7" viewBox="0 0 8 7"><path d="M0.9 0.8H7.1L4 6.2Z" fill="none" stroke="#555" stroke-width="1.2" stroke-linejoin="round"/></svg>
<div class="abs t th" style="left:357.6px;top:263.9px;font-size:13px;line-height:16px"><span class="f" style="letter-spacing:-1.098px;position:relative;left:-0.16px">IČO</span></div>
<svg class="abs" style="left:430.8px;top:268.1px" width="8" height="7" viewBox="0 0 8 7"><path d="M0.9 0.8H7.1L4 6.2Z" fill="none" stroke="#555" stroke-width="1.2" stroke-linejoin="round"/></svg>
<div class="abs t th" style="left:457.2px;top:263.9px;font-size:13px;line-height:16px"><span class="f" style="letter-spacing:-0.156px;position:relative;left:-0.07px">Datum podání</span></div>
<svg class="abs" style="left:570.9px;top:268.1px" width="8" height="7" viewBox="0 0 8 7"><path d="M0.9 0.8H7.1L4 6.2Z" fill="none" stroke="#555" stroke-width="1.2" stroke-linejoin="round"/></svg>
<div class="abs t th" style="left:597.3px;top:263.9px;font-size:13px;line-height:16px"><span class="f" style="letter-spacing:-0.649px;position:relative;left:0.1px">Stav</span></div>
<svg class="abs" style="left:751.1px;top:268.1px" width="8" height="7" viewBox="0 0 8 7"><path d="M0.9 0.8H7.1L4 6.2Z" fill="none" stroke="#555" stroke-width="1.2" stroke-linejoin="round"/></svg>
<div class="abs t th" style="left:777.5px;top:263.9px;font-size:13px;line-height:16px"><span class="f" style="letter-spacing:-0.16px;position:relative;left:-0.02px">Podaná po lhůtě</span></div>
<svg class="abs" style="left:880.8px;top:268.1px" width="8" height="7" viewBox="0 0 8 7"><path d="M0.9 0.8H7.1L4 6.2Z" fill="none" stroke="#555" stroke-width="1.2" stroke-linejoin="round"/></svg>
<div class="abs t th" style="left:907.2px;top:263.9px;font-size:13px;line-height:16px"><span class="f" style="letter-spacing:-0.062px;position:relative;left:-0.07px">Listinná podoba</span></div>
<svg class="abs" style="left:1010.9px;top:268.1px" width="8" height="7" viewBox="0 0 8 7"><path d="M0.9 0.8H7.1L4 6.2Z" fill="none" stroke="#555" stroke-width="1.2" stroke-linejoin="round"/></svg>
<div class="abs t th" style="left:1037.3px;top:263.9px;font-size:13px;line-height:16px"><span class="f" style="letter-spacing:-0.302px;position:relative;left:0.27px">Označena jako nepodaná</span></div>
<svg class="abs" style="left:1221.2px;top:268.1px" width="8" height="7" viewBox="0 0 8 7"><path d="M0.9 0.8H7.1L4 6.2Z" fill="none" stroke="#555" stroke-width="1.2" stroke-linejoin="round"/></svg>
<svg class="abs" style="left:654.4px;top:316.2px" width="26" height="11" viewBox="0 0 26 11" ><path d="M2.2 1.6H7.1Q9.2 5.1 12.6 5.1Q16 5.1 18.1 1.6H23Q24.4 1.6 24.4 3V8.4Q24.4 9.8 23 9.8H2.2Q0.8 9.8 0.8 8.4V3Q0.8 1.6 2.2 1.6Z" fill="none" stroke="#646464" stroke-width="1.5"/></svg>
<div class="abs t empty" style="left:532.2px;top:338.8px;font-size:13px;line-height:16px"><span class="f" style="letter-spacing:-0.1px;position:relative;left:0.54px">Žádné záznamy. Nebyla učiněna žádná podání.</span></div>
</div>
</body>
</html>
